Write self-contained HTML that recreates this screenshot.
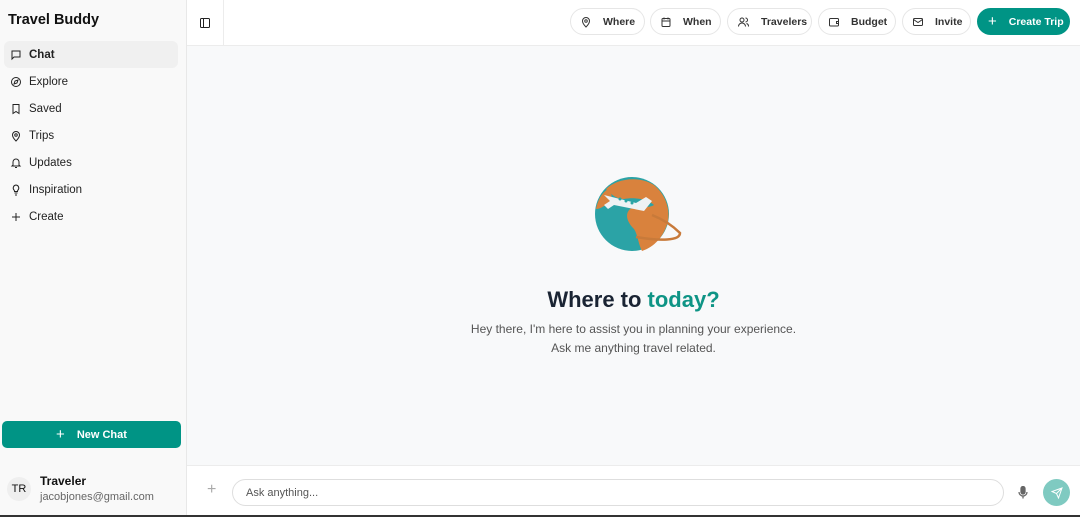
<!DOCTYPE html>
<html><head><style>
*{box-sizing:border-box;margin:0;padding:0}
body{width:1080px;height:517px;overflow:hidden;font-family:"Liberation Sans",sans-serif;background:#f8f9fa;position:relative;color:#111}
.sb{position:absolute;left:0;top:0;width:187px;height:515px;background:#f9f9f9;border-right:1px solid #e8e8e8}
.brand{position:absolute;left:8px;top:12px;font-weight:bold;font-size:14.5px;color:#111}
.nav{position:absolute;left:4px;top:41px;width:174px}
.nav div{height:27px;display:flex;align-items:center;padding-left:6px;font-size:11.5px;color:#222;border-radius:6px}
.nav div svg{margin-right:7px}
.nav .act{background:#f0f0f0;font-weight:bold}
.nc{position:absolute;left:2px;top:421px;width:179px;height:27px;background:#009485;border-radius:5px;color:#fff;font-size:11px;font-weight:bold;display:flex;align-items:center;justify-content:center}
.av{position:absolute;left:7px;top:477px;width:24px;height:24px;border-radius:50%;background:#efefef;font-size:11px;display:flex;align-items:center;justify-content:center}
.hd{position:absolute;left:187px;top:0;right:0;height:46px;background:#fff;border-bottom:1px solid #ececec}
.tg{position:absolute;left:0;top:0;width:37px;height:45px;border-right:1px solid #ececec;display:flex;align-items:center;justify-content:center}
.pill{position:absolute;top:8px;height:27px;border:1px solid #e6e6e6;border-radius:14px;background:#fff;font-size:10.5px;font-weight:bold;color:#333;display:flex;align-items:center;padding-left:9px;white-space:nowrap}
.pill svg{margin-right:11px}
.ct{background:#009485;color:#fff;border-color:#009485}
.bb{position:absolute;left:187px;top:465px;right:0;height:50px;background:#fff;border-top:1px solid #ececec}
.inp{position:absolute;left:45px;top:13px;width:772px;height:27px;border:1px solid #dedede;border-radius:14px;font-size:11px;color:#555;padding-left:13px;display:flex;align-items:center}
.send{position:absolute;left:856px;top:13px;width:27px;height:27px;border-radius:50%;background:#7fcac1;display:flex;align-items:center;justify-content:center}
.bl{position:absolute;left:0;top:515px;width:1080px;height:2px;background:#333}
h1{position:absolute;left:187px;right:0;top:287px;text-align:center;font-size:22px;font-weight:bold;color:#1a2433}
.sub{position:absolute;left:187px;right:0;top:320px;text-align:center;font-size:12px;color:#555;line-height:19px}
</style></head><body>
<div class="sb">
<div class="brand">Travel Buddy</div>
<div class="nav">
<div class="act"><svg width="12" height="12" viewBox="0 0 24 24" fill="none" stroke="#222" stroke-width="2"><path d="M4 4h16v12H8l-4 4z"/></svg>Chat</div>
<div><svg width="12" height="12" viewBox="0 0 24 24" fill="none" stroke="#222" stroke-width="2"><circle cx="12" cy="12" r="9"/><path d="M16 8l-2 6-6 2 2-6z"/></svg>Explore</div>
<div><svg width="12" height="12" viewBox="0 0 24 24" fill="none" stroke="#222" stroke-width="2"><path d="M6 3h12v18l-6-4-6 4z"/></svg>Saved</div>
<div><svg width="12" height="12" viewBox="0 0 24 24" fill="none" stroke="#222" stroke-width="2"><path d="M12 22s7-7 7-12a7 7 0 0 0-14 0c0 5 7 12 7 12z"/><circle cx="12" cy="10" r="2.5"/></svg>Trips</div>
<div><svg width="12" height="12" viewBox="0 0 24 24" fill="none" stroke="#222" stroke-width="2"><path d="M6 16V10a6 6 0 0 1 12 0v6l2 2H4z M10 21h4"/></svg>Updates</div>
<div><svg width="12" height="12" viewBox="0 0 24 24" fill="none" stroke="#222" stroke-width="2"><path d="M9 18h6M10 22h4M12 2a6 6 0 0 0-4 10c1 1 1 2 1 3h6c0-1 0-2 1-3a6 6 0 0 0-4-10z"/></svg>Inspiration</div>
<div><svg width="12" height="12" viewBox="0 0 24 24" fill="none" stroke="#222" stroke-width="2"><path d="M12 4v16M4 12h16"/></svg>Create</div>
</div>
<div class="nc"><span style="font-size:15px;font-weight:normal;margin-right:12px">+</span>New Chat</div>
<div class="av">TR</div>
<div style="position:absolute;left:40px;top:474px;font-size:12px;font-weight:bold">Traveler</div>
<div style="position:absolute;left:40px;top:491px;font-size:11px;color:#666">jacobjones@gmail.com</div>
</div>
<div class="hd">
<div class="tg"><svg width="12" height="12" viewBox="0 0 24 24" fill="none" stroke="#222" stroke-width="2"><rect x="3" y="3" width="18" height="18" rx="2"/><path d="M9 3v18"/></svg></div>
<div class="pill" style="left:383px;width:75px"><svg width="12" height="12" viewBox="0 0 24 24" fill="none" stroke="#333" stroke-width="2"><path d="M12 22s7-7 7-12a7 7 0 0 0-14 0c0 5 7 12 7 12z"/><circle cx="12" cy="10" r="2.5"/></svg>Where</div>
<div class="pill" style="left:463px;width:71px"><svg width="12" height="12" viewBox="0 0 24 24" fill="none" stroke="#333" stroke-width="2"><rect x="4" y="5" width="16" height="16" rx="2"/><path d="M4 10h16M8 3v4M16 3v4"/></svg>When</div>
<div class="pill" style="left:540px;width:85px"><svg width="13" height="12" viewBox="0 0 24 24" fill="none" stroke="#333" stroke-width="2"><circle cx="9" cy="8" r="4"/><path d="M2 21a7 7 0 0 1 14 0M16 4a4 4 0 0 1 0 8M22 21a6 6 0 0 0-4-6"/></svg>Travelers</div>
<div class="pill" style="left:631px;width:78px"><svg width="12" height="12" viewBox="0 0 24 24" fill="none" stroke="#333" stroke-width="2"><rect x="3" y="5" width="18" height="15" rx="2"/><path d="M21 11h-4v4h4"/></svg>Budget</div>
<div class="pill" style="left:715px;width:69px"><svg width="12" height="12" viewBox="0 0 24 24" fill="none" stroke="#333" stroke-width="2"><rect x="3" y="5" width="18" height="14" rx="2"/><path d="M3 7l9 6 9-6"/></svg>Invite</div>
<div class="pill ct" style="left:790px;width:93px;padding-left:10px"><span style="font-size:15px;font-weight:normal;margin-right:12px">+</span>Create Trip</div>
</div>
<svg style="position:absolute;left:592px;top:175px" width="92" height="78" viewBox="0 0 92 78">
<circle cx="40" cy="39" r="37" fill="#2ba3a6"/>
<path d="M14 14C24 4 46 0 62 10c12 10 16 24 14 36-4 16-14 26-26 30-4-8-4-16-8-22-6-6-10-14-4-20 8-4 18 0 24-4-6-6-20-8-30-6-8 0-12-4-18-10z" fill="#d9823d"/>
<path d="M4 34c2-10 6-16 12-20 6 6 4 12-2 16-4 2-6 4-10 4z" fill="#d9823d"/>
<path d="M60 40c10 4 20 10 28 18 0 8-20 8-44 4" fill="none" stroke="#c87a3a" stroke-width="2.5"/>
<path d="M12 20l32 8 10-6 6 4-8 10-30-6-6 4-4-4 6-4z" fill="#eef2f4"/>
<circle cx="28" cy="24" r="1.5" fill="#2aa5a5"/><circle cx="34" cy="26" r="1.5" fill="#2aa5a5"/><circle cx="40" cy="28" r="1.5" fill="#2aa5a5"/>
</svg>
<h1>Where to <span style="color:#0e9485">today?</span></h1>
<div class="sub">Hey there, I'm here to assist you in planning your experience.<br>Ask me anything travel related.</div>
<div class="bb">
<div style="position:absolute;left:20px;top:15px;font-size:16px;color:#aaa">+</div>
<div class="inp">Ask anything...</div>
<svg style="position:absolute;left:831px;top:20px" width="10" height="13" viewBox="0 0 20 26" fill="none" stroke="#666" stroke-width="2.5"><rect x="6" y="1" width="8" height="15" rx="4" fill="#666"/><path d="M2 12a8 8 0 0 0 16 0M10 20v5"/></svg>
<div class="send"><svg width="12" height="12" viewBox="0 0 24 24" fill="none" stroke="#fff" stroke-width="2"><path d="M22 2L11 13M22 2l-7 20-4-9-9-4z"/></svg></div>
</div>
<div class="bl"></div>
</body></html>
